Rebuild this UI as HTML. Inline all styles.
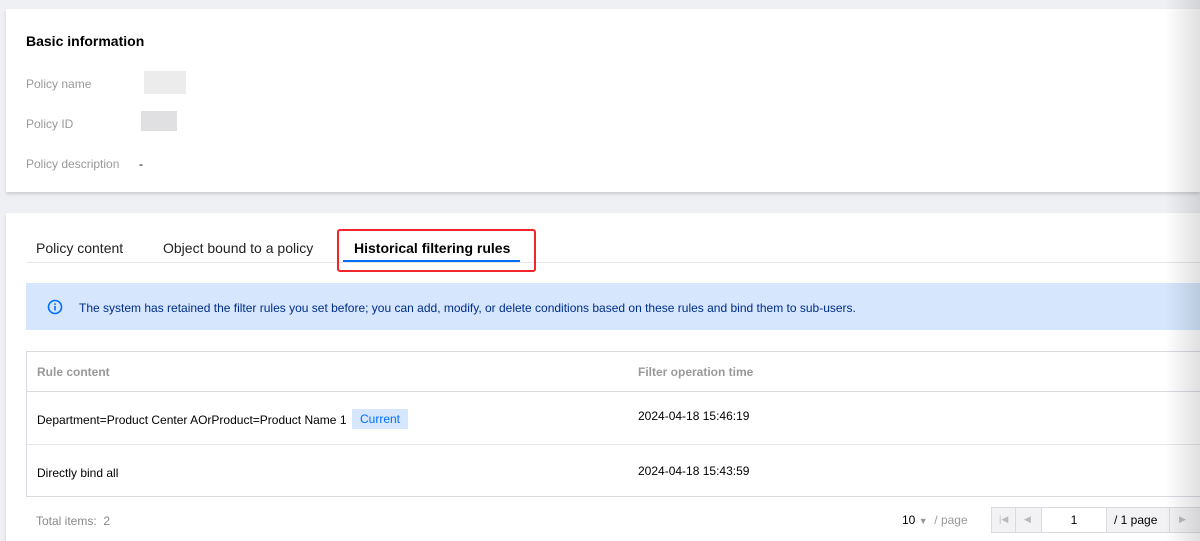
<!DOCTYPE html><html><head><style>
html,body{margin:0;width:1200px;height:541px;overflow:hidden}
body{background:#eff0f4;font-family:"Liberation Sans",Arial,sans-serif;position:relative;font-size:12px;color:#000}
.card{position:absolute;left:6px;right:0;background:#fff;box-shadow:0 2px 3px rgba(0,0,0,.15)}
.lbl{position:absolute;left:20px;color:#999;font-size:12px}
.blur{position:absolute;background:#e4e4e6}
.abs{position:absolute}
</style></head><body>
<div class="card" style="top:9px;height:183px">
 <div class="abs" style="left:20px;top:24px;font-size:14px;font-weight:bold;color:#000">Basic information</div>
 <div class="lbl" style="top:68px">Policy name</div>
 <div class="blur" style="left:138px;top:62px;width:42px;height:23px;background:#ececec"></div>
 <div class="lbl" style="top:108px">Policy ID</div>
 <div class="blur" style="left:135px;top:102px;width:36px;height:20px;background:#e0e0e2"></div>
 <div class="lbl" style="top:148px">Policy description</div>
 <div class="abs" style="left:133px;top:148px">-</div>
</div>
<div class="card" style="top:213px;height:328px">
 <div class="abs" style="left:30px;top:27px;font-size:14px;color:#222">Policy content</div>
 <div class="abs" style="left:157px;top:27px;font-size:14px;color:#222">Object bound to a policy</div>
 <div class="abs" style="left:348px;top:27px;font-size:14px;font-weight:bold;color:#000">Historical filtering rules</div>
 <div class="abs" style="left:20px;right:0;top:49px;height:1px;background:#e5e5ea"></div>
 <div class="abs" style="left:337px;top:47px;width:177px;height:2px;background:#006eff"></div>
 <div class="abs" style="left:331px;top:16px;width:195px;height:39px;border:2px solid #f2262a;border-radius:3px"></div>
 <div class="abs" style="left:20px;right:0;top:70px;height:47px;background:#d5e6fd"></div>
 <svg class="abs" style="left:41px;top:86px" width="16" height="16" viewBox="0 0 16 16"><circle cx="8" cy="8" r="6.5" fill="none" stroke="#006eff" stroke-width="1.6"/><rect x="7.2" y="7" width="1.6" height="4.5" fill="#006eff"/><rect x="7.2" y="4.3" width="1.6" height="1.6" fill="#006eff"/></svg>
 <div class="abs" style="left:73px;top:88px;color:#002c8a">The system has retained the filter rules you set before; you can add, modify, or delete conditions based on these rules and bind them to sub-users.</div>
 <div class="abs" style="left:20px;right:0;top:138px;height:144px;border:1px solid #d9dbe3;border-right:none"></div>
 <div class="abs" style="left:31px;top:152px;color:#999;font-weight:bold">Rule content</div>
 <div class="abs" style="left:632px;top:152px;color:#999;font-weight:bold">Filter operation time</div>
 <div class="abs" style="left:21px;right:0;top:178px;height:1px;background:#d9dbe3"></div>
 <div class="abs" style="left:31px;top:200px">Department=Product Center AOrProduct=Product Name 1</div>
 <div class="abs" style="left:346px;top:196px;width:56px;height:20px;background:#d5e6fd;color:#006eff;line-height:20px;text-align:center">Current</div>
 <div class="abs" style="left:632px;top:196px">2024-04-18 15:46:19</div>
 <div class="abs" style="left:21px;right:0;top:231px;height:1px;background:#e5e5ea"></div>
 <div class="abs" style="left:31px;top:253px">Directly bind all</div>
 <div class="abs" style="left:632px;top:251px">2024-04-18 15:43:59</div>
 <div class="abs" style="left:30px;top:301px;color:#888">Total items:&nbsp; 2</div>
 <div class="abs" style="left:896px;top:300px;color:#000">10 <span style="color:#999;font-size:9px">▼</span> <span style="color:#999">&nbsp;/ page</span></div>
 <div class="abs" style="left:985px;top:294px;width:220px;height:24px;border:1px solid #d9dbe3;background:#f2f2f4"></div>
 <div class="abs" style="left:1009px;top:295px;width:1px;height:24px;background:#d9dbe3"></div>
 <div class="abs" style="left:1035px;top:295px;width:64px;height:24px;background:#fff;border-left:1px solid #d9dbe3;border-right:1px solid #d9dbe3;text-align:center;line-height:24px">1</div>
 <div class="abs" style="left:1108px;top:300px">/ 1 page</div>
 <div class="abs" style="left:1163px;top:295px;width:1px;height:24px;background:#d9dbe3"></div>
 <div class="abs" style="left:993px;top:301px;color:#bbb;font-size:9px">|◀</div>
 <div class="abs" style="left:1018px;top:301px;color:#bbb;font-size:9px">◀</div>
 <div class="abs" style="left:1173px;top:301px;color:#bbb;font-size:9px">▶</div>
</div>
<div class="abs" style="right:0;top:0;width:35px;height:541px;background:linear-gradient(to right,rgba(0,0,0,0),rgba(0,0,0,.12))"></div>
</body></html>
